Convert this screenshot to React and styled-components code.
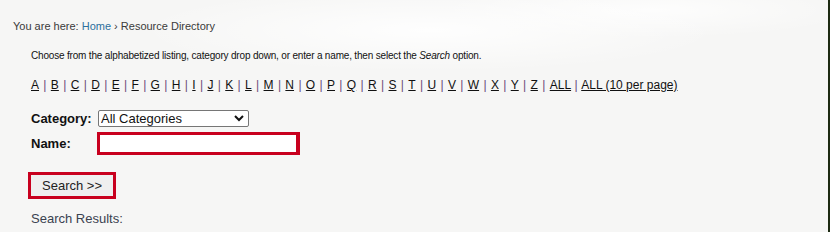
import React from "react";
import styled, { createGlobalStyle } from "styled-components";

const Global = createGlobalStyle`
  html, body { margin: 0; padding: 0; }
  body {
    width: 830px;
    height: 232px;
    overflow: hidden;
    font-family: "Liberation Sans", Arial, sans-serif;
  }
`;

const Page = styled.div`
  width: 830px;
  height: 232px;
  box-sizing: border-box;
  border-right: 2px solid #1d2a12;
  background:
    radial-gradient(ellipse 420px 60px at 430px 30px, rgba(255,255,255,0.9), rgba(255,255,255,0) 70%),
    radial-gradient(ellipse 300px 40px at 650px 10px, rgba(255,255,255,0.8), rgba(255,255,255,0) 70%),
    #f6f6f5;
  padding: 19px 0 0 13px;
  color: #333;
`;

const Crumbs = styled.div`
  font-size: 11px;
  line-height: 14px;
  color: #3a3a3a;
`;

const CrumbLink = styled.a`
  color: #2b6f9c;
  text-decoration: none;
`;

const Content = styled.div`
  padding-left: 18px;
`;

const Intro = styled.p`
  margin: 16px 0 0;
  font-size: 10px;
  line-height: 13px;
  letter-spacing: -0.18px;
  color: #111;
`;

const Letters = styled.div`
  margin-top: 16px;
  font-size: 12px;
  line-height: 14px;
  color: #222;
  display: flex;
  align-items: center;
`;

const Letter = styled.a`
  color: #111;
  text-decoration: underline;
`;

const Sep = styled.span`
  color: #6a4a7a;
  margin: 0 ${(p) => (p.$tight ? 3.5 : 4.35)}px;
`;

const Form = styled.div`
  margin-top: 18px;
  display: grid;
  grid-template-columns: 67px auto;
  row-gap: 5px;
  align-items: center;
  justify-content: start;
`;

const Label = styled.label`
  font-weight: bold;
  font-size: 13px;
  color: #111;
`;

const Select = styled.select`
  width: 151px;
  height: 17px;
  font-family: "Liberation Sans", Arial, sans-serif;
  font-size: 13px;
  padding: 0 0 0 2px;
  border: 1px solid #767676;
  border-radius: 2px;
  background: #fff;
  color: #111;
  appearance: none;
  background-image: url("data:image/svg+xml;utf8,<svg xmlns='http://www.w3.org/2000/svg' width='10' height='7' viewBox='0 0 10 7'><path d='M1 1l4 4 4-4' fill='none' stroke='%23111' stroke-width='2'/></svg>");
  background-repeat: no-repeat;
  background-position: right 4px center;
`;

const TextInput = styled.input`
  width: 203px;
  height: 23px;
  box-sizing: border-box;
  border: 3px solid #c8001e;
  border-right-width: 4px;
  background: #fff;
  margin-left: -1px;
  outline: none;
`;

const ButtonWrap = styled.div`
  margin-top: 17px;
  margin-left: -3px;
`;

const Button = styled.button`
  width: 88px;
  height: 27px;
  box-sizing: border-box;
  border: 3px solid #c8001e;
  background: #efefef;
  font-family: "Liberation Sans", Arial, sans-serif;
  font-size: 13px;
  color: #222;
  padding: 0;
  text-align: center;
`;

const Results = styled.div`
  margin-top: 12px;
  font-size: 13px;
  color: #3a4250;
`;

const letters = "ABCDEFGHIJKLMNOPQRSTUVWXYZ".split("");

export default function App() {
  return (
    <>
      <Global />
      <Page>
        <Crumbs>
          You are here: <CrumbLink href="#">Home</CrumbLink> › Resource Directory
        </Crumbs>
        <Content>
          <Intro>
            Choose from the alphabetized listing, category drop down, or enter a name, then select the <i>Search</i> option.
          </Intro>
          <Letters>
            {letters.map((l) => (
              <React.Fragment key={l}>
                <Letter href="#">{l}</Letter>
                <Sep>|</Sep>
              </React.Fragment>
            ))}
            <Letter href="#">ALL</Letter>
            <Sep $tight>|</Sep>
            <Letter href="#">ALL (10 per page)</Letter>
          </Letters>
          <Form>
            <Label>Category:</Label>
            <Select defaultValue="all">
              <option value="all">All Categories</option>
            </Select>
            <Label>Name:</Label>
            <TextInput type="text" />
          </Form>
          <ButtonWrap>
            <Button>Search &gt;&gt;</Button>
          </ButtonWrap>
          <Results>Search Results:</Results>
        </Content>
      </Page>
    </>
  );
}
